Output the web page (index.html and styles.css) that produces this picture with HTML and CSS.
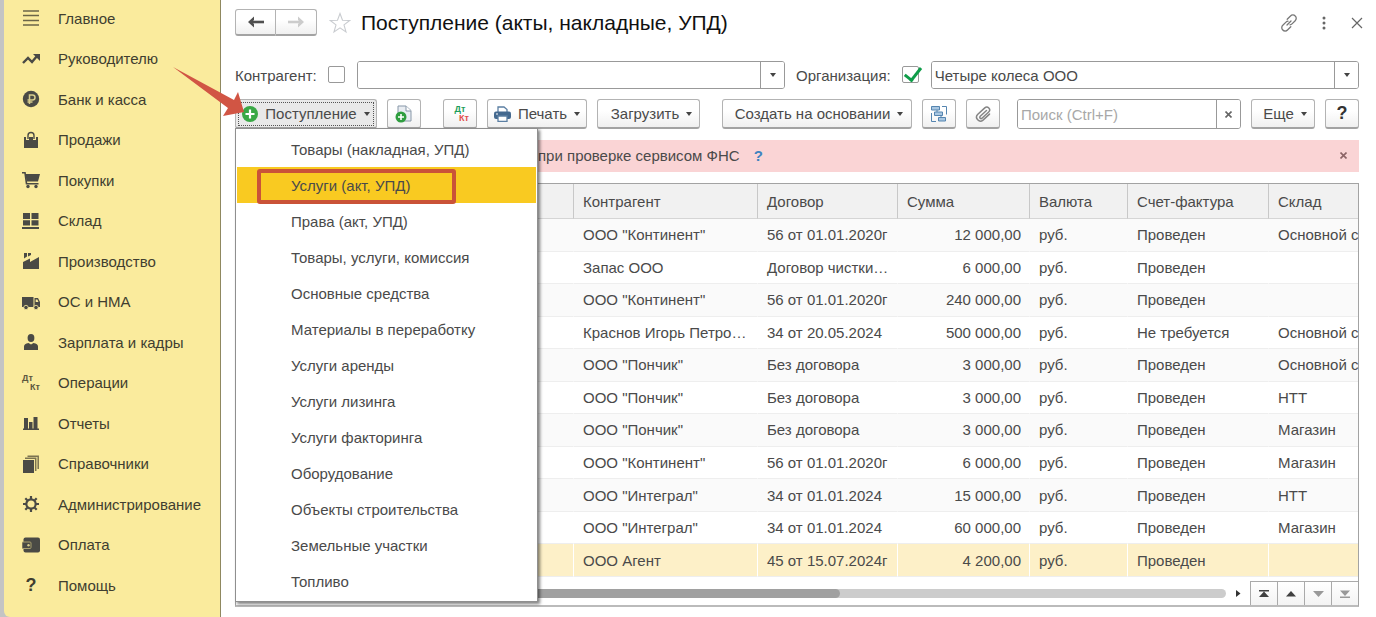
FILE: index.html
```html
<!DOCTYPE html>
<html lang="ru">
<head>
<meta charset="utf-8">
<title>Поступление (акты, накладные, УПД)</title>
<link rel="stylesheet" href="styles.css">
</head>
<body>
<div class="app">
  <nav class="sidebar">
    <a class="nav-item" href="#"><svg viewBox="0 0 18 18"><path d="M1 2h16M1 6.500h16M1 11.500h16M1 16h16" stroke="#6b6548" stroke-width="1.400"/></svg>Главное</a>
    <a class="nav-item" href="#"><svg viewBox="0 0 18 18"><path d="M1 13l5-5 4 4 5-6" fill="none" stroke="#4a4a45" stroke-width="2.400"/><path d="M11 4h7v7z" fill="#4a4a45"/></svg>Руководителю</a>
    <a class="nav-item" href="#"><svg viewBox="0 0 18 18"><circle cx="9" cy="9" r="8.200" fill="#4a4a45"/><path d="M7.500 14V5h3a2.400 2.400 0 0 1 0 5H5.500M5.500 12h5" fill="none" stroke="#d8cd8c" stroke-width="1.500"/></svg>Банк и касса</a>
    <a class="nav-item" href="#"><svg viewBox="0 0 18 18"><path d="M2 6h14v11H2z" fill="#4a4a45"/><path d="M5.500 9V4.500a3.500 3.500 0 0 1 7 0V9" fill="none" stroke="#faeb9d" stroke-width="3"/><path d="M6 8V4.500a3 3 0 0 1 6 0V8" fill="none" stroke="#4a4a45" stroke-width="1.400"/></svg>Продажи</a>
    <a class="nav-item" href="#"><svg viewBox="0 0 18 18"><path d="M0 1.700h3l1.500 11h12" fill="none" stroke="#4a4a45" stroke-width="1.600"/><path d="M3.500 3H18l-2 7.500H4.500z" fill="#4a4a45"/><circle cx="6" cy="15.500" r="1.700" fill="#4a4a45"/><circle cx="14" cy="15.500" r="1.700" fill="#4a4a45"/></svg>Покупки</a>
    <a class="nav-item" href="#"><svg viewBox="0 0 18 18"><path d="M1 1h7v6H1zM9.500 1h7v6h-7zM1 8.200h7v5.300H1zM9.500 8.200h7v5.300h-7zM0 15h17v2H0z" fill="#4a4a45"/></svg>Склад</a>
    <a class="nav-item" href="#"><svg viewBox="0 0 18 18"><path d="M1 17v-7l7-3.500V10l9-5v12zM2 1h3v3.500L2 6.500zM6 1h3v2L6 4.500z" fill="#4a4a45"/></svg>Производство</a>
    <a class="nav-item" href="#"><svg viewBox="0 0 18 18"><path d="M0 4h11.500v10H0zM12.500 5h3.500l2 4v5h-5.500z" fill="#4a4a45"/><path d="M13.700 6.500h1.600L16.500 9h-2.800z" fill="#faeb9d"/><circle cx="4" cy="14.500" r="2.200" fill="#4a4a45" stroke="#faeb9d" stroke-width=".8"/><circle cx="14" cy="14.500" r="2.200" fill="#4a4a45" stroke="#faeb9d" stroke-width=".8"/></svg>ОС и НМА</a>
    <a class="nav-item" href="#"><svg viewBox="0 0 18 18"><ellipse cx="9" cy="5" rx="3.400" ry="4" fill="#4a4a45"/><path d="M2 17v-3.500q0-3 4.500-3.500L9 11.500 11.500 10q4.500.5 4.500 3.500V17z" fill="#4a4a45"/></svg>Зарплата и кадры</a>
    <a class="nav-item" href="#"><span class="dtkt dtkt-nav" aria-hidden="true"><b>Дт</b><b>Кт</b></span>Операции</a>
    <a class="nav-item" href="#"><svg viewBox="0 0 18 18"><path d="M2 4h4v11H2zM7 8h3.500v7H7zM11.500 3h4v12h-4zM1 14.500h16V16H1z" fill="#4a4a45"/></svg>Отчеты</a>
    <a class="nav-item" href="#"><svg viewBox="0 0 18 18"><path d="M1 5h11v13H1z" fill="#4a4a45"/><path d="M3 3.300h10.700V16M5.500 1.300h10.700V14" fill="none" stroke="#7b7350" stroke-width="1.500"/></svg>Справочники</a>
    <a class="nav-item" href="#"><svg viewBox="0 0 18 18"><circle cx="9" cy="9" r="4.700" fill="none" stroke="#4a4a45" stroke-width="2.200"/><path d="M9 1v3M9 14v3M1 9h3M14 9h3M3.300 3.300l2 2M12.700 12.700l2 2M3.300 14.700l2-2M12.700 5.300l2-2" stroke="#4a4a45" stroke-width="2.200"/></svg>Администрирование</a>
    <a class="nav-item" href="#"><svg viewBox="0 0 18 18"><rect x="1.500" y="1.500" width="16.500" height="15" rx="2" fill="#4a4a45"/><rect x="0" y="6" width="9" height="6.500" rx="1" fill="#4a4a45" stroke="#a99f6d"/><circle cx="6.500" cy="9.200" r="1.200" fill="#d8cd8c"/></svg>Оплата</a>
    <a class="nav-item" href="#"><b class="nav-help" aria-hidden="true">?</b>Помощь</a>
  </nav>

  <main class="main">
    <header class="titlebar">
      <div class="history">
        <button type="button" class="btn" aria-label="Назад"><svg width="18" height="12" viewBox="0 0 18 12"><path d="M17 6H5" stroke="#4f4f4f" stroke-width="2.600"/><path d="M1 6l6-5.500v3.500L5 6l2 2v3.500z" fill="#4f4f4f"/></svg></button>
        <button type="button" class="btn" aria-label="Вперед"><svg width="18" height="12" viewBox="0 0 18 12"><path d="M1 6h12" stroke="#ccc" stroke-width="2.600"/><path d="M17 6l-6-5.500v3.500l2 2-2 2v3.500z" fill="#ccc"/></svg></button>
      </div>
      <button type="button" class="icon-btn" aria-label="В избранное"><svg width="22" height="22" viewBox="0 0 22 22"><path d="M11 1.500l2.500 6.800 7.200.2-5.700 4.400 2 7-6-4.100-6 4.100 2-7L1.300 8.500l7.200-.2z" fill="#fff" stroke="#c9ccd0" stroke-width="1.100"/></svg></button>
      <h1>Поступление (акты, накладные, УПД)</h1>
      <div class="window-tools">
        <button type="button" class="icon-btn" aria-label="Ссылка"><svg width="18" height="18" viewBox="0 0 18 18" fill="none" stroke="#777" stroke-width="1.300" stroke-linecap="round"><path d="M7.200 5.300l3.300-3.300a3.200 3.200 0 0 1 4.700 0 3.200 3.200 0 0 1 0 4.700L12 9.900a3 3 0 0 1-2 .9M10.800 12.700L7.500 16a3.200 3.200 0 0 1-4.700 0 3.200 3.200 0 0 1 0-4.700L6 8.100a3 3 0 0 1 2-.9M7 11l4-4"/></svg></button>
        <button type="button" class="icon-btn" aria-label="Меню"><svg width="18" height="18" viewBox="0 0 18 18" fill="#666"><circle cx="9" cy="4" r="1.500"/><circle cx="9" cy="9" r="1.500"/><circle cx="9" cy="14" r="1.500"/></svg></button>
        <button type="button" class="icon-btn" aria-label="Закрыть"><svg width="12" height="12" viewBox="0 0 12 12"><path d="M1 1l10 10M11 1L1 11" stroke="#666" stroke-width="1.200"/></svg></button>
      </div>
    </header>

    <div class="filters">
      <label for="use-partner">Контрагент:</label>
      <input type="checkbox" id="use-partner" class="check">
      <div class="field combo">
        <input type="text" aria-label="Контрагент" value="">
        <button type="button" aria-label="Выбрать контрагента"><i class="caret"></i></button>
      </div>
      <label for="use-org" class="label-org">Организация:</label>
      <input type="checkbox" id="use-org" class="check" checked>
      <div class="field combo">
        <input type="text" aria-label="Организация" value="Четыре колеса ООО">
        <button type="button" aria-label="Выбрать организацию"><i class="caret"></i></button>
      </div>
    </div>

    <div class="toolbar">
      <div class="group">
        <div class="create">
          <button type="button" class="btn btn-create" aria-haspopup="true" aria-expanded="true"><svg width="16" height="16" viewBox="0 0 16 16"><circle cx="8" cy="8" r="8" fill="#39a845"/><path d="M8 3.500v9M3.500 8h9" stroke="#fff" stroke-width="2.200"/></svg>Поступление<i class="caret"></i></button>
          <div class="menu" role="menu">
            <button type="button" role="menuitem">Товары (накладная, УПД)</button>
            <button type="button" role="menuitem" class="active">Услуги (акт, УПД)</button>
            <button type="button" role="menuitem">Права (акт, УПД)</button>
            <button type="button" role="menuitem">Товары, услуги, комиссия</button>
            <button type="button" role="menuitem">Основные средства</button>
            <button type="button" role="menuitem">Материалы в переработку</button>
            <button type="button" role="menuitem">Услуги аренды</button>
            <button type="button" role="menuitem">Услуги лизинга</button>
            <button type="button" role="menuitem">Услуги факторинга</button>
            <button type="button" role="menuitem">Оборудование</button>
            <button type="button" role="menuitem">Объекты строительства</button>
            <button type="button" role="menuitem">Земельные участки</button>
            <button type="button" role="menuitem">Топливо</button>
          </div>
        </div>
        <button type="button" class="btn btn-square" aria-label="Скопировать"><svg width="18" height="18" viewBox="0 0 18 18"><path d="M3 1h8l5 4.500V16H3z" fill="#e9edf2" stroke="#8797a8"/><path d="M11 1v5h5" fill="#fff" stroke="#8797a8"/><circle cx="6" cy="12" r="5.500" fill="#2f9e3f"/><path d="M6 9v6M3 12h6" stroke="#fff" stroke-width="1.600"/></svg></button>
      </div>
      <div class="group">
        <button type="button" class="btn btn-square" aria-label="Проводки"><span class="dtkt dtkt-color"><b>Дт</b><b>Кт</b></span></button>
        <button type="button" class="btn btn-print"><svg width="17" height="16" viewBox="0 0 17 16"><path d="M4 6V1h6l3 2.500V6" fill="#fff" stroke="#5b7fa3" stroke-width="1.300"/><rect x="0" y="5.500" width="17" height="7.500" rx="2" fill="#44698f"/><path d="M4 10h9v5.300H4z" fill="#fff" stroke="#5b7fa3" stroke-width="1.300"/><path d="M2 8h2" stroke="#fff"/></svg>Печать<i class="caret"></i></button>
        <button type="button" class="btn btn-load">Загрузить<i class="caret"></i></button>
      </div>
      <div class="group">
        <button type="button" class="btn btn-base">Создать на основании<i class="caret"></i></button>
        <button type="button" class="btn btn-square" aria-label="Структура подчиненности"><svg width="18" height="18" viewBox="0 0 18 18" fill="#a9c7e2" stroke="#5585b0" stroke-width="1"><path d="M1.500 1.500h8v3.500h-8zM4.500 7h8v3.500h-8zM8.500 12.500h7v3.500h-7z"/><path d="M12 1.500h4.500v8M1.500 8v8.500h4.500M7 5v2M11 10.500v2" fill="none"/></svg></button>
        <button type="button" class="btn btn-square" aria-label="Файлы"><svg width="18" height="18" viewBox="0 0 18 18" fill="none" stroke="#858585" stroke-width="1.500" stroke-linecap="round"><path d="M12.500 5.500l-6.300 5.800a1.300 1.300 0 0 0 1.800 1.900l6.700-6.200a2.800 2.800 0 0 0-3.900-4.100L3.600 9.500a3.900 3.900 0 0 0 5.400 5.600l6.500-6"/></svg></button>
      </div>
      <div class="group group-search">
        <div class="field search">
          <input type="text" aria-label="Поиск" placeholder="Поиск (Ctrl+F)">
          <button type="button" aria-label="Очистить"><svg width="7" height="7" viewBox="0 0 7 7"><path d="M.5.500l6 6M6.500.500l-6 6" stroke="#666" stroke-width="1.600"/></svg></button>
        </div>
        <button type="button" class="btn btn-more">Еще<i class="caret"></i></button>
        <button type="button" class="btn btn-square btn-help">?</button>
      </div>
    </div>

    <div class="notice">
      <span>при проверке сервисом ФНС</span>
      <a href="#">?</a>
      <button type="button" aria-label="Скрыть"><svg width="7" height="7" viewBox="0 0 7 7"><path d="M.5.500l6 6M6.500.500l-6 6" stroke="#8c6466" stroke-width="1.600"/></svg></button>
    </div>

    <section class="list">
      <div class="table-wrap">
      <table>
        <colgroup><col class="c-date"><col class="c-partner"><col class="c-contract"><col class="c-sum"><col class="c-cur"><col class="c-inv"><col></colgroup>
        <thead><tr><th></th><th>Контрагент</th><th>Договор</th><th>Сумма</th><th>Валюта</th><th>Счет-фактура</th><th>Склад</th></tr></thead>
        <tbody>
          <tr><td></td><td>ООО "Континент"</td><td>56 от 01.01.2020г</td><td class="num">12 000,00</td><td>руб.</td><td>Проведен</td><td>Основной с</td></tr>
          <tr><td></td><td>Запас ООО</td><td>Договор чистки…</td><td class="num">6 000,00</td><td>руб.</td><td>Проведен</td><td></td></tr>
          <tr><td></td><td>ООО "Континент"</td><td>56 от 01.01.2020г</td><td class="num">240 000,00</td><td>руб.</td><td>Проведен</td><td></td></tr>
          <tr><td></td><td>Краснов Игорь Петро…</td><td>34 от 20.05.2024</td><td class="num">500 000,00</td><td>руб.</td><td>Не требуется</td><td>Основной с</td></tr>
          <tr><td></td><td>ООО "Пончик"</td><td>Без договора</td><td class="num">3 000,00</td><td>руб.</td><td>Проведен</td><td>Основной с</td></tr>
          <tr><td></td><td>ООО "Пончик"</td><td>Без договора</td><td class="num">3 000,00</td><td>руб.</td><td>Проведен</td><td>НТТ</td></tr>
          <tr><td></td><td>ООО "Пончик"</td><td>Без договора</td><td class="num">3 000,00</td><td>руб.</td><td>Проведен</td><td>Магазин</td></tr>
          <tr><td></td><td>ООО "Континент"</td><td>56 от 01.01.2020г</td><td class="num">6 000,00</td><td>руб.</td><td>Проведен</td><td>Магазин</td></tr>
          <tr><td></td><td>ООО "Интеграл"</td><td>34 от 01.01.2024</td><td class="num">15 000,00</td><td>руб.</td><td>Проведен</td><td>НТТ</td></tr>
          <tr><td></td><td>ООО "Интеграл"</td><td>34 от 01.01.2024</td><td class="num">60 000,00</td><td>руб.</td><td>Проведен</td><td>Магазин</td></tr>
          <tr class="selected"><td></td><td>ООО Агент</td><td>45 от 15.07.2024г</td><td class="num">4 200,00</td><td>руб.</td><td>Проведен</td><td></td></tr>
        </tbody>
      </table>
      </div>
      <div class="list-footer">
        <div class="track"><div class="thumb"></div></div>
        <svg class="scroll-right" width="5" height="7" viewBox="0 0 5 7"><path d="M0 0l4.500 3.500L0 7z" fill="#333"/></svg>
        <div class="pager">
          <button type="button" aria-label="В начало"><svg width="10" height="8" viewBox="0 0 10 8" fill="#404040"><path d="M0 0h10v1.500H0zM5 1.500L10 7H0z"/></svg></button>
          <button type="button" aria-label="Вверх"><svg width="10" height="6" viewBox="0 0 10 6" fill="#404040"><path d="M5 0l5 5.500H0z"/></svg></button>
          <button type="button" aria-label="Вниз"><svg width="11" height="6" viewBox="0 0 11 6" fill="#999"><path d="M5.500 6L0 0h11z"/></svg></button>
          <button type="button" aria-label="В конец"><svg width="10" height="8" viewBox="0 0 10 8" fill="#999"><path d="M0 6.500h10V8H0zM5 6L0 .5h10z"/></svg></button>
        </div>
      </div>
    </section>
    <svg class="pointer" width="72" height="50" viewBox="0 0 72 50" aria-hidden="true"><path d="M0 0l61 33 4-8 6 20-21 4 5-8z" fill="#d15544"/></svg>
  </main>
</div>
</body>
</html>
```
FILE: styles.css
```css
* { box-sizing: border-box; }

body {
  margin: 0;
  font-family: "Liberation Sans", Arial, sans-serif;
  font-size: 15px;
  color: #4a4a4a;
  background: #fff;
}

button, input { font: inherit; color: inherit; }
button { padding: 0; border: 0; background: none; }
svg { display: block; flex: none; }

.app {
  display: flex;
  min-height: 100vh;
  background: #c4c4c4;
  padding-left: 4px;
}

/* Navigation */
.sidebar {
  flex: none;
  width: 217px;
  display: flex;
  flex-direction: column;
  justify-content: space-between;
  padding: 0 0 14px 18px;
  background: #faeb9d;
  border-right: 1px solid #8f8860;
  border-bottom-left-radius: 6px;
}
.nav-item {
  display: flex;
  align-items: center;
  gap: 18px;
  height: 36px;
  color: #403e30;
  text-decoration: none;
}
.nav-item svg, .nav-help { width: 18px; }
.nav-item svg { height: 18px; }
.nav-help { font-size: 18px; text-align: center; }

.dtkt {
  display: flex;
  flex-direction: column;
  width: 18px;
  font-size: 9px;
  line-height: 9px;
}
.dtkt b:last-child { align-self: flex-end; }
.dtkt-nav { color: #5c573f; }
.dtkt-color b:first-child { color: #1e9e5a; }
.dtkt-color b:last-child { color: #e2504c; }

/* Page */
.main {
  position: relative;
  flex: 1;
  min-width: 0;
  display: flex;
  flex-direction: column;
  padding: 9px 17px 10px 14px;
  background: #fff;
}

.titlebar { display: flex; align-items: center; height: 27px; }
.history { display: flex; margin-right: 12px; }
.history .btn { width: 41px; height: 27px; }
.history .btn:first-child { border-radius: 3px 0 0 3px; }
.history .btn:last-child { border-radius: 0 3px 3px 0; border-left: 0; }
.titlebar h1 {
  flex: 1;
  margin: 0 0 0 10px;
  font-size: 21px;
  font-weight: 400;
  line-height: 24px;
  color: #111;
}
.window-tools { display: flex; align-items: center; gap: 17px; }
.window-tools .icon-btn:last-child { margin: 0 -4px 0 1px; }

.btn {
  display: flex;
  align-items: center;
  justify-content: center;
  height: 30px;
  border: 1px solid #b3b3b3;
  border-bottom: 2px solid #a3a3a3;
  border-radius: 3px;
  background: linear-gradient(#fff 40%, #f0f0f0);
  white-space: nowrap;
}
.caret {
  flex: none;
  border: 3px solid transparent;
  border-top: 4px solid #444;
  border-bottom: 0;
}

.field {
  display: flex;
  min-width: 0;
  border: 1px solid #999;
  border-radius: 3px;
  overflow: hidden;
}
.field input {
  flex: 1;
  width: 0;
  border: 0;
  outline: 0;
  padding: 0 3px;
  background: #fff;
}
.field input::placeholder { color: #a8a8a8; opacity: 1; }
.field button {
  flex: none;
  width: 24px;
  display: flex;
  align-items: center;
  justify-content: center;
  border-left: 1px solid #999;
  background: #fff;
}

.filters { display: flex; align-items: center; margin-top: 25px; }
.check {
  appearance: none;
  flex: none;
  width: 17px;
  height: 17px;
  margin: 0 12px 2px 11px;
  border: 1px solid #999;
  border-radius: 2px;
  background: #fff;
  position: relative;
}
.check:checked::after {
  content: "";
  position: absolute;
  left: 5px;
  top: -3px;
  width: 7px;
  height: 14px;
  border: solid #0f9d49;
  border-width: 0 3px 3px 0;
  transform: rotate(38deg);
}
.combo { flex: 1; height: 28px; }
.label-org { margin-left: 11px; }

.toolbar { display: flex; margin-top: 10px; gap: 22px; }
.group { display: flex; gap: 10px; }
.group-search { flex: 1; min-width: 0; margin-left: -5px; }
.btn-square { width: 34px; }
.btn-create {
  width: 142px;
  gap: 7px;
  background: #e9e9e9;
  outline: 1px dotted #555;
  outline-offset: -4px;
}
.btn-print { width: 100px; gap: 7px; }
.btn-load { width: 103px; gap: 7px; padding-left: 6px; }
.btn-base { width: 190px; gap: 7px; padding-left: 4px; }
.btn-more { width: 64px; gap: 7px; padding-left: 4px; }
.btn-help { font-size: 18px; font-weight: 700; color: #333; }
.search { flex: 1; height: 30px; }

/* Drop-down of document kinds */
.create { position: relative; }
.menu {
  position: absolute;
  z-index: 2;
  top: 29px;
  left: 0;
  width: 303px;
  padding: 2px 1px;
  border: 1px solid #8f8f8f;
  background: #fff;
  box-shadow: 2px 2px 3px rgba(0, 0, 0, .5);
}
.menu button {
  position: relative;
  display: block;
  width: 100%;
  height: 36px;
  padding-left: 54px;
  text-align: left;
}
.menu .active { background: #f9ca21; }
.menu .active::after {
  content: "";
  position: absolute;
  inset: 2px 80px -1px 20px;
  border: 4px solid #ca5338;
  border-radius: 3px;
  z-index: 1;
}

.notice {
  display: flex;
  align-items: center;
  gap: 14px;
  height: 32px;
  margin-top: 11px;
  padding: 0 12px 2px 303px;
  background: #fad4d5;
}
.notice a { color: #3d83c0; font-weight: 700; text-decoration: none; }
.notice button { margin-left: auto; }

/* Document list */
.list {
  flex: 1;
  display: flex;
  flex-direction: column;
  margin-top: 11px;
  border: 1px solid #a3a3a3;
  border-bottom: 2px solid #bbb;
}
.table-wrap { flex: 1; display: grid; }
table {
  width: 100%;
  height: 100%;
  table-layout: fixed;
  border-collapse: separate;
  border-spacing: 0;
}
.c-date { width: 338px; }
.c-partner { width: 184px; }
.c-contract { width: 140px; }
.c-sum { width: 132px; }
.c-cur { width: 98px; }
.c-inv { width: 141px; }
th, td {
  padding: 0 0 0 9px;
  text-align: left;
  font-weight: 400;
  white-space: nowrap;
  border-right: 1px solid transparent;
}
th {
  height: 35px;
  background: #f1f1f1;
  border-right-color: #c8c8c8;
  border-bottom: 1px solid #d5d5d5;
}
th:last-child, td:last-child { border-right: 0; }
td { height: 32px; border-bottom: 1px solid #eee; }
tbody tr:nth-child(odd) { background: #fafafa; }
td.num { padding-right: 8px; text-align: right; }
tbody tr.selected { background: #fdf0c8; }
.selected td { border-right-color: #fff; }

.list-footer { display: flex; align-items: center; height: 24px; margin-top: 4px; }
.track { flex: 1; height: 9px; border-radius: 5px; background: #ccc; }
.thumb { width: 61%; height: 9px; border-radius: 5px; background: #a0a0a0; }
.scroll-right { margin: 0 9px 0 10px; }
.pager { display: flex; align-self: stretch; border-top: 1px solid #aaa; }
.pager button {
  display: flex;
  align-items: center;
  justify-content: center;
  width: 27px;
  border-left: 1px solid #aaa;
  background: linear-gradient(#fff, #f3f3f3);
}

/* Callout arrow drawn over the page */
.pointer { position: absolute; z-index: 3; left: -48px; top: 67px; }
```
